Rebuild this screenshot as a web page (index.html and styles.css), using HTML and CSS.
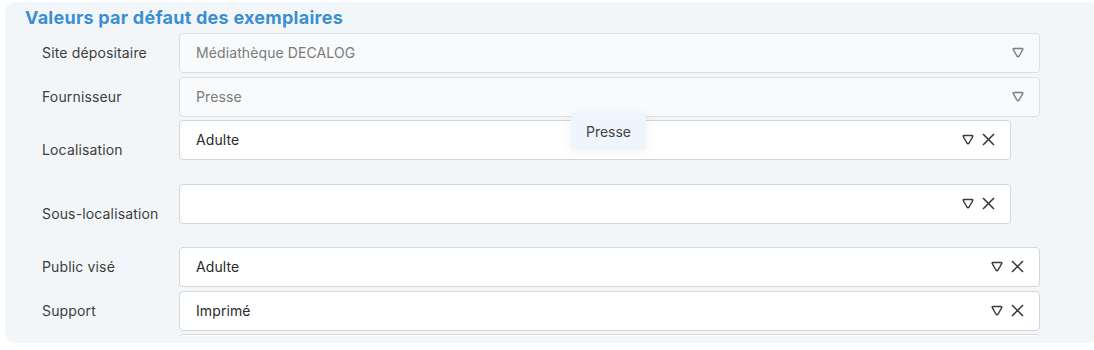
FILE: index.html
```html
<!DOCTYPE html>
<html lang="fr">
<head>
<meta charset="utf-8">
<link rel="stylesheet" href="styles.css">
</head>
<body>
<section class="panel">
  <h2 class="title">Valeurs par défaut des exemplaires</h2>
  <div class="form">
    <div class="row r1">
      <div class="label">Site dépositaire</div>
      <div class="field wide disabled">
        <span class="value">Médiathèque DECALOG</span>
        <span class="icons">
          <svg class="chev" width="12" height="11" viewBox="0 0 12 11"><path d="M2 1.5 H10 Q11.3 1.5 10.7 2.7 L7.1 9 Q6 10.6 4.9 9 L1.3 2.7 Q0.7 1.5 2 1.5 Z"/></svg>
        </span>
      </div>
    </div>
    <div class="row r2">
      <div class="label">Fournisseur</div>
      <div class="field wide disabled">
        <span class="value">Presse</span>
        <span class="icons">
          <svg class="chev" width="12" height="11" viewBox="0 0 12 11"><path d="M2 1.5 H10 Q11.3 1.5 10.7 2.7 L7.1 9 Q6 10.6 4.9 9 L1.3 2.7 Q0.7 1.5 2 1.5 Z"/></svg>
        </span>
      </div>
    </div>
    <div class="row tall r3">
      <div class="label">Localisation</div>
      <div class="field narrow">
        <span class="value">Adulte</span>
        <span class="icons">
          <svg class="chev" width="12" height="11" viewBox="0 0 12 11"><path d="M2 1.5 H10 Q11.3 1.5 10.7 2.7 L7.1 9 Q6 10.6 4.9 9 L1.3 2.7 Q0.7 1.5 2 1.5 Z"/></svg>
          <svg class="close" width="13" height="13" viewBox="0 0 13 13"><path d="M1 1 L12 12 M12 1 L1 12"/></svg>
        </span>
      </div>
    </div>
    <div class="row tall r4">
      <div class="label">Sous-localisation</div>
      <div class="field narrow">
        <span class="value"></span>
        <span class="icons">
          <svg class="chev" width="12" height="11" viewBox="0 0 12 11"><path d="M2 1.5 H10 Q11.3 1.5 10.7 2.7 L7.1 9 Q6 10.6 4.9 9 L1.3 2.7 Q0.7 1.5 2 1.5 Z"/></svg>
          <svg class="close" width="13" height="13" viewBox="0 0 13 13"><path d="M1 1 L12 12 M12 1 L1 12"/></svg>
        </span>
      </div>
    </div>
    <div class="row r5">
      <div class="label">Public visé</div>
      <div class="field wide">
        <span class="value">Adulte</span>
        <span class="icons">
          <svg class="chev" width="12" height="11" viewBox="0 0 12 11"><path d="M2 1.5 H10 Q11.3 1.5 10.7 2.7 L7.1 9 Q6 10.6 4.9 9 L1.3 2.7 Q0.7 1.5 2 1.5 Z"/></svg>
          <svg class="close" width="13" height="13" viewBox="0 0 13 13"><path d="M1 1 L12 12 M12 1 L1 12"/></svg>
        </span>
      </div>
    </div>
    <div class="row r6">
      <div class="label">Support</div>
      <div class="field wide">
        <span class="value">Imprimé</span>
        <span class="icons">
          <svg class="chev" width="12" height="11" viewBox="0 0 12 11"><path d="M2 1.5 H10 Q11.3 1.5 10.7 2.7 L7.1 9 Q6 10.6 4.9 9 L1.3 2.7 Q0.7 1.5 2 1.5 Z"/></svg>
          <svg class="close" width="13" height="13" viewBox="0 0 13 13"><path d="M1 1 L12 12 M12 1 L1 12"/></svg>
        </span>
      </div>
    </div>
    <div class="row r7">
      <div class="label"></div>
      <div class="field wide"></div>
    </div>
  </div>
  <div class="popup">Presse</div>
</section>
</body>
</html>
```
FILE: styles.css
```css
* { box-sizing: border-box; }
html, body { margin: 0; padding: 0; background: #ffffff; }
body {
  font-family: Inter, "Noto Sans", sans-serif;
  width: 1094px;
  height: 350px;
  overflow: hidden;
}
.panel {
  position: relative;
  margin: 2px 0 0 5px;
  width: 1095px;
  height: 341px;
  background: #f3f6f9;
  border-radius: 10px;
  padding: 4px 0 0 0;
}
.title {
  margin: 0 0 0 20px;
  font-size: 18px;
  line-height: 23px;
  font-weight: 700;
  letter-spacing: 0.25px;
  color: #3b8fd1;
  height: 27px;
}
.form {
  height: 303px;
  overflow: hidden;
  padding-left: 37px;
}
.row {
  display: flex;
  align-items: flex-start;
}
.r1 { height: 44px; }
.r2 { height: 43px; }
.r3 { height: 64px; }
.r4 { height: 63px; }
.r5 { height: 44px; }
.r6 { height: 43px; }
.label {
  width: 138px;
  height: 39px;
  display: flex;
  align-items: center;
  font-size: 14px;
  letter-spacing: 0.15px;
  color: #3d3d3d;
}
.tall .label { height: 59px; }
.field {
  height: 40px;
  margin-left: -1px;
  background: #ffffff;
  border: 1px solid #d3d6da;
  border-radius: 4px;
  display: flex;
  align-items: center;
  justify-content: space-between;
  padding: 0 15px 1px 16px;
  font-size: 14px;
  letter-spacing: 0.1px;
  color: #2a2a2a;
}
.wide { width: 861px; }
.narrow { width: 832px; }
.disabled {
  background: #f8fafc;
  border-color: #dcdfe3;
  color: #7a7a7a;
}
.icons {
  display: flex;
  align-items: center;
  gap: 8px;
}
.chev path {
  fill: none;
  stroke: #3a3a3a;
  stroke-width: 1.4;
  stroke-linejoin: round;
}
.disabled .chev path { stroke: #7d7d7d; }
.close path {
  fill: none;
  stroke: #333;
  stroke-width: 1.5;
}
.popup {
  position: absolute;
  left: 566px;
  top: 111px;
  width: 75px;
  height: 36px;
  background: #eef5fd;
  box-shadow: 0 2px 10px rgba(0, 0, 0, 0.06);
  display: flex;
  align-items: center;
  justify-content: center;
  font-size: 14px;
  color: #444;
}
```
